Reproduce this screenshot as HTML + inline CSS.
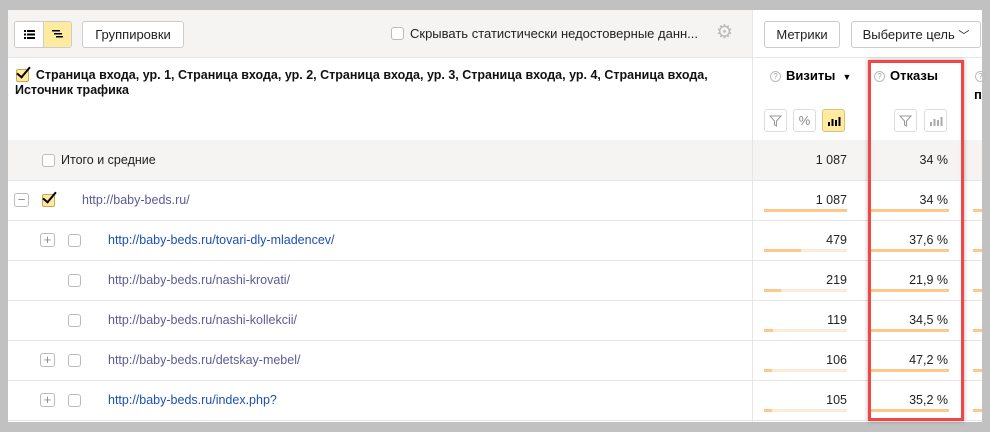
<!DOCTYPE html>
<html><head><meta charset="utf-8"><style>
*{margin:0;padding:0;box-sizing:border-box}
body{width:990px;height:432px;background:#c1c1c1;position:relative;overflow:hidden;font-family:"Liberation Sans","DejaVu Sans",sans-serif;font-size:12px;color:#000}
.a{position:absolute}
.w{left:8px;top:10px;width:974px;height:412px;background:#fff}
.btn{position:absolute;border:1px solid #ccc;border-radius:3px;background:#fff;font-size:13px;color:#222;text-align:center;line-height:25px;height:27px}
.cb{position:absolute;width:13px;height:13px;border:1px solid #bbb;border-radius:3px;background:#fff}
.cbk{position:absolute;width:13px;height:13px;border:1px solid #c9a94c;border-radius:2px;background:#ffe9a0}
.cbk:after{content:"";position:absolute;left:3px;top:-6px;width:5px;height:12px;border-right:2px solid #000;border-bottom:2px solid #000;transform:rotate(40deg)}
.pm{position:absolute;width:15px;height:14px;border:1px solid #bbb;border-radius:3px;color:#888;font-size:13px;line-height:11px;text-align:center}
.hl{position:absolute;left:8px;width:974px;height:1px;background:#e6e6e6}
.url{position:absolute;font-size:12.5px}
.n{position:absolute;font-size:12.5px;color:#222;text-align:right}
.bar{position:absolute;height:3px;background:#fdebd6}
.bar i{display:block;height:3px;background:#ffc78a}
.ib{position:absolute;width:23px;height:23px;border:1px solid #ddd;border-radius:3px;background:#fff}
.q{display:inline-block;width:11px;height:11px;border:1px solid #bbb;border-radius:50%;font-size:8px;line-height:9px;text-align:center;color:#aaa;vertical-align:1px;margin-right:5px;font-weight:normal}
</style></head><body>
<div class="a w"></div>
<div class="a" style="left:8px;top:10px;width:744px;height:47px;background:#f5f4f2"></div>
<div class="a" style="left:8px;top:140px;width:974px;height:40px;background:#f5f4f2"></div>
<div class="a" style="left:752px;top:10px;width:1px;height:412px;background:#e6e6e6"></div>
<div class="a" style="left:8px;top:57px;width:974px;height:1px;background:#e6e6e6"></div>
<!-- toolbar -->
<div class="btn" style="left:14px;top:21px;width:58px;overflow:hidden;padding:0">
<div class="a" style="left:0;top:0;width:29px;height:25px;background:#fff;border-right:1px solid #ccc"></div>
<div class="a" style="left:29px;top:0;width:28px;height:25px;background:#ffeba0"></div>
<svg class="a" style="left:9px;top:8px" width="11" height="9"><rect x="0" y="0" width="2" height="2"/><rect x="3" y="0" width="8" height="2"/><rect x="0" y="3.5" width="2" height="2"/><rect x="3" y="3.5" width="8" height="2"/><rect x="0" y="7" width="2" height="2"/><rect x="3" y="7" width="8" height="2"/></svg>
<svg class="a" style="left:37px;top:8px" width="11" height="9"><rect x="0" y="0" width="8" height="1.5"/><rect x="2" y="3" width="8" height="1.5"/><rect x="4" y="6" width="7" height="1.5"/></svg>
</div>
<div class="btn" style="left:82px;top:21px;width:102px">Группировки</div>
<div class="cb" style="left:391px;top:27px"></div>
<div class="a" style="left:410px;top:26px;font-size:13px;color:#222">Скрывать статистически недостоверные данн...</div>
<div class="a" style="left:716px;top:24px;font-size:19px;color:#bbb;line-height:18px">⚙</div>
<div class="btn" style="left:764px;top:21px;width:76px">Метрики</div>
<div class="btn" style="left:851px;top:21px;width:130px">Выберите цель <span style="font-size:11px">﹀</span></div>
<!-- header -->
<div class="cbk" style="left:16px;top:69px"></div>
<div class="a" style="left:15px;top:68px;width:720px;font-weight:bold;font-size:12.5px;line-height:15px;color:#111">&nbsp;&nbsp;&nbsp;&nbsp;&nbsp;&nbsp;Страница входа, ур. 1, Страница входа, ур. 2, Страница входа, ур. 3, Страница входа, ур. 4, Страница входа,<br>Источник трафика</div>
<div class="a" style="left:770px;top:68px;font-weight:bold;font-size:13px"><span class="q">?</span>Визиты&nbsp;&nbsp;<span style="font-size:9px">▼</span></div>
<div class="a" style="left:874px;top:68px;font-weight:bold;font-size:13px"><span class="q">?</span>Отказы</div>
<div class="a" style="left:975px;top:68px;font-weight:bold;font-size:13px"><span class="q">?</span></div>
<div class="a" style="left:974px;top:87px;font-weight:bold;font-size:13px">п</div>
<div class="ib" style="left:764px;top:109px"><svg width="21" height="21"><path d="M5 6h11l-4.5 5v5l-2-1v-4z" fill="none" stroke="#999"/></svg></div>
<div class="ib" style="left:793px;top:109px;font-size:13px;color:#888;text-align:center;line-height:21px">%</div>
<div class="ib" style="left:822px;top:109px;background:#ffeba0;border-color:#d9c27a"><svg width="21" height="21"><rect x="5" y="12" width="2" height="4"/><rect x="8.5" y="9" width="2" height="7"/><rect x="12" y="10" width="2" height="6"/><rect x="15.5" y="7" width="2" height="9"/></svg></div>
<div class="ib" style="left:894px;top:109px"><svg width="21" height="21"><path d="M5 6h11l-4.5 5v5l-2-1v-4z" fill="none" stroke="#999"/></svg></div>
<div class="ib" style="left:924px;top:109px"><svg width="21" height="21" fill="#aaa"><rect x="5" y="12" width="2" height="4"/><rect x="8.5" y="9" width="2" height="7"/><rect x="12" y="10" width="2" height="6"/><rect x="15.5" y="7" width="2" height="9"/></svg></div>
<!-- totals -->
<div class="cb" style="left:42px;top:154px"></div>
<div class="a" style="left:61px;top:153px;font-size:12.5px;color:#222">Итого и средние</div>
<div class="n" style="left:760px;width:87px;top:153px">1 087</div>
<div class="n" style="left:870px;width:78px;top:153px">34 %</div>
<div class="hl" style="top:180px"></div>
<div class="hl" style="top:220px"></div>
<div class="hl" style="top:260px"></div>
<div class="hl" style="top:300px"></div>
<div class="hl" style="top:340px"></div>
<div class="hl" style="top:380px"></div>
<div class="hl" style="top:420px"></div>
<!-- row 1 -->
<div class="pm" style="left:14px;top:193px">−</div>
<div class="cbk" style="left:42px;top:194px"></div>
<div class="url" style="left:82px;top:193px;color:#5c5a98">http://baby-beds.ru/</div>
<!-- rows -->
<div class="pm" style="left:40px;top:233px">+</div><div class="cb" style="left:68px;top:234px"></div>
<div class="url" style="left:108px;top:233px;color:#1c4fb8">http://baby-beds.ru/tovari-dly-mladencev/</div>
<div class="cb" style="left:68px;top:274px"></div>
<div class="url" style="left:108px;top:273px;color:#5c5a98">http://baby-beds.ru/nashi-krovati/</div>
<div class="cb" style="left:68px;top:314px"></div>
<div class="url" style="left:108px;top:313px;color:#5c5a98">http://baby-beds.ru/nashi-kollekcii/</div>
<div class="pm" style="left:40px;top:353px">+</div><div class="cb" style="left:68px;top:354px"></div>
<div class="url" style="left:108px;top:353px;color:#5c5a98">http://baby-beds.ru/detskay-mebel/</div>
<div class="pm" style="left:40px;top:393px">+</div><div class="cb" style="left:68px;top:394px"></div>
<div class="url" style="left:108px;top:393px;color:#1c4fb8">http://baby-beds.ru/index.php?</div>
<!-- numbers -->
<div class="n" style="left:760px;width:87px;top:193px">1 087</div><div class="bar" style="left:764px;top:209px;width:83px"><i style="width:83px"></i></div>
<div class="n" style="left:760px;width:87px;top:233px">479</div><div class="bar" style="left:764px;top:249px;width:83px"><i style="width:37px"></i></div>
<div class="n" style="left:760px;width:87px;top:273px">219</div><div class="bar" style="left:764px;top:289px;width:83px"><i style="width:17px"></i></div>
<div class="n" style="left:760px;width:87px;top:313px">119</div><div class="bar" style="left:764px;top:329px;width:83px"><i style="width:9px"></i></div>
<div class="n" style="left:760px;width:87px;top:353px">106</div><div class="bar" style="left:764px;top:369px;width:83px"><i style="width:8px"></i></div>
<div class="n" style="left:760px;width:87px;top:393px">105</div><div class="bar" style="left:764px;top:409px;width:83px"><i style="width:8px"></i></div>
<div class="n" style="left:870px;width:78px;top:193px">34 %</div><div class="bar" style="left:871px;top:209px;width:78px"><i style="width:78px"></i></div>
<div class="n" style="left:870px;width:78px;top:233px">37,6 %</div><div class="bar" style="left:871px;top:249px;width:78px"><i style="width:78px"></i></div>
<div class="n" style="left:870px;width:78px;top:273px">21,9 %</div><div class="bar" style="left:871px;top:289px;width:78px"><i style="width:78px"></i></div>
<div class="n" style="left:870px;width:78px;top:313px">34,5 %</div><div class="bar" style="left:871px;top:329px;width:78px"><i style="width:78px"></i></div>
<div class="n" style="left:870px;width:78px;top:353px">47,2 %</div><div class="bar" style="left:871px;top:369px;width:78px"><i style="width:78px"></i></div>
<div class="n" style="left:870px;width:78px;top:393px">35,2 %</div><div class="bar" style="left:871px;top:409px;width:78px"><i style="width:78px"></i></div>
<div class="bar" style="left:973px;top:209px;width:9px"><i style="width:9px"></i></div>
<div class="bar" style="left:973px;top:249px;width:9px"><i style="width:9px"></i></div>
<div class="bar" style="left:973px;top:289px;width:9px"><i style="width:9px"></i></div>
<div class="bar" style="left:973px;top:329px;width:9px"><i style="width:9px"></i></div>
<div class="bar" style="left:973px;top:369px;width:9px"><i style="width:9px"></i></div>
<div class="bar" style="left:973px;top:409px;width:9px"><i style="width:9px"></i></div>
<!-- red box -->
<div class="a" style="left:868px;top:60px;width:96px;height:361px;border:3px solid #f24545;box-shadow:0 0 4px rgba(0,0,0,.35)"></div>
</body></html>
